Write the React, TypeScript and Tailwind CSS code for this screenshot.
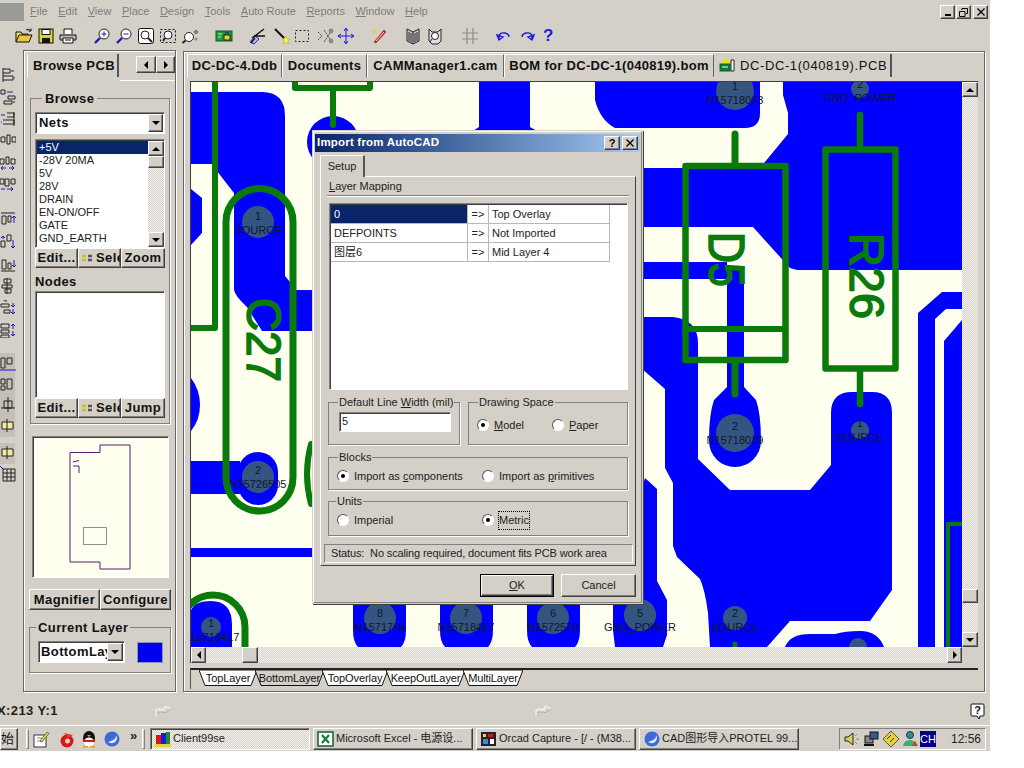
import React from 'react';

const raised = 'border border-t-white border-l-white border-r-[#404040] border-b-[#404040] shadow-[inset_-1px_-1px_0_#808080]';
const sunken = 'border border-t-[#808080] border-l-[#808080] border-r-white border-b-white shadow-[inset_1px_1px_0_#404040]';
const dither = 'bg-[repeating-conic-gradient(#d4d0c8_0%_25%,#f4f3f0_0%_50%)] bg-[length:2px_2px]';
const boldUi = 'font-bold tracking-[0.4px] text-[13px] text-[#111]';

const GREEN = '#0a7a0a';
const BLUE = '#0000ff';
const PADC = '#34557f';

// little triangle used by scrollbars and combos
const Arrow: React.FC<{ dir: 'up' | 'down' | 'left' | 'right' }> = ({ dir }) => {
  const pts = { up: '0,6 4,2 8,6', down: '0,2 8,2 4,6', left: '6,0 6,8 2,4', right: '2,0 2,8 6,4' }[dir];
  return (
    <svg width="8" height="8" viewBox="0 0 8 8">
      <polygon points={pts} fill="#000" />
    </svg>
  );
};

const ScrollBtn: React.FC<{ dir: 'up' | 'down' | 'left' | 'right'; className?: string }> = ({ dir, className = 'w-[15px] h-[15px]' }) => (
  <div className={`${className} ${raised} bg-[#d4d0c8] flex items-center justify-center shrink-0`}>
    <Arrow dir={dir} />
  </div>
);

const Magnifier: React.FC<{ mark?: 'plus' | 'minus' }> = ({ mark }) => (
  <>
    <circle cx="11" cy="7" r="5" fill="#fff" stroke="#222" />
    <line x1="7" y1="11" x2="2" y2="16" stroke="#1a1ab8" strokeWidth="2.4" />
    {mark && <line x1="8.5" y1="7" x2="13.5" y2="7" stroke="#1a1ab8" />}
    {mark === 'plus' && <line x1="11" y1="4.5" x2="11" y2="9.5" stroke="#1a1ab8" />}
  </>
);

const toolbarIcons: { key: string; cls: string; el: React.ReactNode }[] = [
  { key: 'open', cls: 'ml-[13px]', el: (<><path d="M1 15V5h5l1 2h6v2" fill="#f2dc6a" stroke="#111" /><path d="M1 15l3-7h13l-3 7z" fill="#e8c83c" stroke="#111" /><path d="M11 3q3-2 5 1M16 4V1.5M16 4h-2.5" fill="none" stroke="#111" /></>) },
  { key: 'save', cls: '', el: (<><rect x="2" y="2" width="14" height="14" fill="#d9d62e" stroke="#111" /><rect x="5" y="2.5" width="8" height="5" fill="#fff" stroke="#111" /><rect x="5" y="11" width="8" height="5" fill="#111" /></>) },
  { key: 'print', cls: '', el: (<><path d="M5 7V2h8v5" fill="#fff" stroke="#111" /><path d="M1 8h16v5H1z" fill="#bbb" stroke="#111" /><path d="M4 11h10v5H4z" fill="#fff" stroke="#111" /><path d="M6 13h6" stroke="#111" /></>) },
  { key: 'zin', cls: 'ml-[12px]', el: <Magnifier mark="plus" /> },
  { key: 'zout', cls: '', el: <Magnifier mark="minus" /> },
  { key: 'zfit', cls: '', el: (<><rect x="1.5" y="1.5" width="15" height="15" rx="2" fill="#fff" stroke="#111" /><circle cx="8" cy="8" r="4" fill="none" stroke="#222" /><path d="M11 11l4 4" stroke="#222" strokeWidth="2" /></>) },
  { key: 'zarea', cls: '', el: (<><rect x="1.5" y="2.5" width="15" height="13" fill="none" stroke="#111" strokeDasharray="2 2" /><circle cx="9" cy="8" r="4" fill="#fff" stroke="#222" /><path d="M6 11l-2 3" stroke="#222" strokeWidth="2" /></>) },
  { key: 'zsel', cls: '', el: (<><circle cx="8" cy="10" r="4.5" fill="#fff" stroke="#222" /><path d="M4.5 13.5L1.5 16" stroke="#222" strokeWidth="2" /><circle cx="15" cy="5" r="1.5" fill="#c8c020" stroke="#555" /><circle cx="15" cy="12" r="1.5" fill="#888" /></>) },
  { key: 'pcb', cls: 'ml-[12px]', el: (<><rect x="1" y="4" width="16" height="10" fill="#1f9a3a" stroke="#0c5a1c" /><path d="M3 7h4M3 10h3" stroke="#bfeebf" /><rect x="9" y="8" width="6" height="5" fill="#e8d23c" stroke="#222" /><path d="M10.5 8V6.5a1.5 1.5 0 0 1 3 0V8" fill="none" stroke="#222" /></>) },
  { key: 'route', cls: 'ml-[11px]', el: (<><path d="M2 15l5-6 4 3-5 5z" fill="#b8b8ff" stroke="#2222c8" /><path d="M4 11l12-9M3 16l4-5M6 9h11" stroke="#111" strokeWidth="1.4" /></>) },
  { key: 'sel', cls: 'ml-[3px]', el: (<><path d="M2 2l9 9" stroke="#111" strokeWidth="2" /><path d="M13 9l1.3 2.7 2.7.3-2 2 .5 3-2.5-1.4-2.5 1.4.5-3-2-2 2.7-.3z" fill="#f2ee4a" stroke="#a8a420" strokeWidth=".5" /></>) },
  { key: 'rect', cls: '-ml-[2px]', el: <rect x="2.5" y="3.5" width="13" height="11" fill="none" stroke="#222" strokeDasharray="2 2" /> },
  { key: 'swap', cls: 'ml-[2px]', el: (<><path d="M1 5l4 4-4 4M7 3l8 12M7 15l8-12" fill="none" stroke="#444" strokeDasharray="2 1" /><circle cx="14" cy="4" r="2.4" fill="#888" /><circle cx="14" cy="14" r="2.4" fill="#888" /></>) },
  { key: 'move', cls: '-ml-[2px]', el: <path d="M9 1v16M1 9h16M9 1L7 4M9 1l2 3M9 17l-2-3M9 17l2-3M1 9l3-2M1 9l3 2M17 9l-3-2M17 9l-3 2" fill="none" stroke="#1a1ad8" /> },
  { key: 'pen', cls: 'ml-[11px]', el: (<><path d="M4 15L14 3l2 2L6 16z" fill="#d83030" stroke="#901010" strokeWidth=".6" /><path d="M4 2v5M1.5 4.5h5M2 3l4 3" stroke="#e8d23c" /><path d="M6 14l8-9" stroke="#f4d8d0" /></>) },
  { key: 'book', cls: 'ml-[12px]', el: <path d="M3 2l6 3 6-3v12l-6 3-6-3zM9 5v12M5 5v9M7 6v9M11 6v9M13 5v9" fill="#c8c8c8" stroke="#222" /> },
  { key: 'book2', cls: '', el: (<><path d="M3 2l3 3h6l3-3v12l-3 3H6l-3-3z" fill="#ddd" stroke="#222" /><circle cx="9" cy="9" r="3.5" fill="#fff" stroke="#222" /><path d="M6 12l-2 3" stroke="#222" /></>) },
  { key: 'grid', cls: 'ml-[13px]', el: <path d="M6 1v16M12 1v16M1 6h16M1 12h16" stroke="#8a8a8a" strokeWidth="1.2" /> },
  { key: 'undo', cls: 'ml-[12px]', el: <path d="M4 12q-1-7 6-6 4 1 4 4M2 8l2 5 4-3z" fill="none" stroke="#1a1ad8" strokeWidth="1.4" /> },
  { key: 'redo', cls: 'ml-[1px]', el: <path d="M14 12q1-7-6-6-4 1-4 4M16 8l-2 5-4-3z" fill="none" stroke="#1a1ad8" strokeWidth="1.4" /> },
];

// [black strokes, blue arrows] for the alignment bar on the far left
const alignIcons: [string, string][] = [
  ['M3 1v14M3 2h7v4H3M3 9h10v4H3', 'M14 4H11M14 11h1'],
  ['M1 1h4v4H1zM8 7h7v3H8zM4 12h8v3H4z', 'M7 3h6M15 13h-2'],
  ['M14 1v14M7 2h7v4H7M3 9h11v4H3', 'M1 4h4M1 11h1'],
  ['M1 4h4v5H1zM7 2h3v9H7zM12 4h4v5h-4z', ''],
  ['M0 4h4v5H0zM6 2h3v7H6zM11 4h4v5h-4z', 'M1 13h5M3 11l-2 2 2 2M9 13h5M12 11l2 2-2 2'],
  ['M0 2h4v5H0zM5 2h4v7H5zM11 2h4v5h-4z', 'M1 12h4M7 12h6M11 10l2 2-2 2'],
  ['M1 1h14M2 4h4v8H2zM8 4h3v6H8z', 'M14 11V4M12 6l2-2 2 2'],
  ['M1 7h4v6H1zM7 1h4v6H7z', 'M3 2v3M13 6v8M11 12l2 2 2-2M1 4l2-2 2 2'],
  ['M1 15h14M2 4h4v9H2zM8 7h3v6H8z', 'M14 4v7M12 9l2 2 2-2'],
  ['M4 1h7v4H4zM2 7h10v3H2zM5 11h6v4H5zM7 0v16', ''],
  ['M1 4h8v3H1zM4 10h6v3H4zM3 0h3v2', 'M13 3v4M11 5l2 2 2-2M13 9v5M11 12l2 2 2-2'],
  ['M1 2h8v4H1zM1 8h8v3H1zM1 13h8v3H1z', 'M13 2v5M11 4l2-2 2 2M13 9v5M11 12l2 2 2-2'],
  ['M1 3h4v10H1zM7 3h5v6H7z', 'M0 15h16'],
  ['M1 3h4v5H1zM7 3h5v10H7zM1 10h4v4H1z', ''],
  ['M4 4h8v7H4zM8 0v15M1 11h14', ''],
  ['M2 4h11v7H2zM7 1v13', ''],
  ['M2 4h11v7H2zM7 1v13', ''],
  ['M3 3h12v12H3zM3 7h12M3 11h12M7 3v12M11 3v12', 'M0 0l4 4'],
];

const SideBar: React.FC = () => (
  <div className="w-[23px] shrink-0 flex flex-col pt-[15px] overflow-hidden">
    {alignIcons.map(([black, blue], i) => (
      <div
        key={i}
        className={`${i >= 12 ? 'h-[21px]' : 'h-[22px]'} shrink-0 ${i === 6 ? 'mt-[13px]' : ''} ${i === 12 ? 'mt-[11px]' : ''} ${i === 16 ? 'mt-[6px]' : ''} ${i >= 12 && i <= 16 ? 'bg-[#c4c0b8]' : ''} w-[15px]`}
      >
        <svg width="16" height="16" viewBox="0 0 16 16" className="mt-[2px]">
          <path d={black} fill={i === 15 || i === 16 ? '#f2eea0' : 'none'} stroke="#222" />
          {blue && <path d={blue} fill="none" stroke="#1a1ab8" />}
        </svg>
      </div>
    ))}
  </div>
);

const PanelButton: React.FC<{ label: string; cls: string; icon?: boolean }> = ({ label, cls, icon }) => (
  <div className={`${cls} ${raised} bg-[#d4d0c8] flex items-center justify-center overflow-hidden ${boldUi}`}>
    {icon && (
      <svg width="10" height="10" viewBox="0 0 10 10" className="shrink-0 mr-[4px]">
        <path d="M0 3h4M0 7h4" stroke="#c8c020" strokeWidth="2.4" />
        <path d="M6 3h4M6 7h4" stroke="#555" strokeWidth="2.4" />
      </svg>
    )}
    <span className="whitespace-nowrap">{label}</span>
  </div>
);

const nets = ['-28V 20MA', '5V', '28V', 'DRAIN', 'EN-ON/OFF', 'GATE', 'GND_EARTH'];

const BrowsePanel: React.FC = () => (
  <div className="w-[153px] h-[642px] shrink-0 border border-[#666] shadow-[inset_1px_1px_0_#fff,1px_1px_0_#fff] flex flex-col">
    <div className="h-[26px] mt-[3px] flex items-start shrink-0">
      <div className={`ml-[3px] w-[93px] h-[23px] border-l border-l-white border-r-2 border-r-[#555] pl-[5px] flex items-center whitespace-nowrap ${boldUi}`}>Browse PCB</div>
      <div className={`ml-[17px] mt-[2px] w-[20px] h-[17px] ${raised} flex items-center justify-center`}><Arrow dir="left" /></div>
      <div className={`w-[19px] mt-[2px] h-[17px] ${raised} flex items-center justify-center`}><Arrow dir="right" /></div>
    </div>
    <div className="border-t border-white ml-[96px] shrink-0" />

    <fieldset className="ml-[6px] mt-[10px] w-[140px] h-[333px] border border-[#808080] shadow-[1px_1px_0_#fff] px-[4px] shrink-0">
      <legend className={`ml-[7px] px-[3px] leading-[15px] ${boldUi}`}>Browse</legend>
      <div className={`mt-[6px] w-[130px] h-[22px] ${sunken} bg-white flex items-center justify-between pr-[1px]`}>
        <span className={`pl-[3px] ${boldUi}`}>Nets</span>
        <ScrollBtn dir="down" className="w-[15px] h-[18px]" />
      </div>
      <div className={`mt-[5px] w-[130px] h-[109px] ${sunken} bg-white flex pl-[1px] pt-[1px]`}>
        <div className="flex-1 text-[11px] leading-[13px] text-[#222] overflow-hidden">
          <div className="bg-[#0a246a] text-white pl-[2px] h-[13px]">+5V</div>
          {nets.map((n) => <div key={n} className="pl-[2px] h-[13px]">{n}</div>)}
        </div>
        <div className={`w-[16px] ${dither} flex flex-col justify-between`}>
          <div className="flex flex-col">
            <ScrollBtn dir="up" className="w-[16px] h-[15px]" />
            <div className={`w-[16px] h-[12px] ${raised} bg-[#d4d0c8]`} />
          </div>
          <ScrollBtn dir="down" className="w-[16px] h-[15px]" />
        </div>
      </div>
      <div className="flex w-[130px] h-[20px]">
        <PanelButton label="Edit..." cls="w-[43px]" />
        <PanelButton label="Sele" icon cls="w-[43px] !justify-start pl-[3px]" />
        <PanelButton label="Zoom" cls="w-[44px]" />
      </div>
      <div className={`mt-[4px] h-[19px] ${boldUi}`}>Nodes</div>
      <div className={`w-[130px] h-[107px] ${sunken} bg-white`} />
      <div className="flex w-[130px] h-[20px]">
        <PanelButton label="Edit..." cls="w-[43px]" />
        <PanelButton label="Sele" icon cls="w-[43px] !justify-start pl-[3px]" />
        <PanelButton label="Jump" cls="w-[44px]" />
      </div>
    </fieldset>

    <div className={`ml-[8px] mt-[12px] w-[137px] h-[142px] ${sunken} bg-[#fffff0] shrink-0`}>
      <svg width="135" height="140" viewBox="33 438 135 140">
        <path d="M70 453.5H100V446H130V570H100V563H70Z" fill="none" stroke="#5a1a6e" />
        <path d="M73 463l6-1.5M73 467h6v7" fill="none" stroke="#5a1a6e" />
        <rect x="83.5" y="528.5" width="23" height="17" fill="none" stroke="#222" strokeDasharray="1 1" />
      </svg>
    </div>

    <div className="ml-[5px] mt-[11px] flex shrink-0">
      <PanelButton label="Magnifier" cls="w-[71px] h-[21px]" />
      <PanelButton label="Configure" cls="w-[71px] h-[21px]" />
    </div>

    <fieldset className="ml-[5px] mt-[10px] w-[142px] h-[53px] border border-[#808080] shadow-[1px_1px_0_#fff] shrink-0">
      <legend className={`ml-[6px] px-[2px] leading-[15px] ${boldUi}`}>Current Layer</legend>
      <div className="flex items-center mt-[6px]">
        <div className={`ml-[8px] w-[87px] h-[22px] ${sunken} bg-white flex items-center justify-between pr-[1px] overflow-hidden`}>
          <span className={`pl-[2px] w-[68px] overflow-hidden whitespace-nowrap ${boldUi}`}>BottomLay</span>
          <ScrollBtn dir="down" className="w-[16px] h-[18px]" />
        </div>
        <div className="ml-[12px] w-[26px] h-[21px] bg-[#0000f0] border border-[#9090c0]" />
      </div>
    </fieldset>
  </div>
);

const docTabs: { label: string; cls: string }[] = [
  { label: 'DC-DC-4.Ddb', cls: 'w-[95px]' },
  { label: 'Documents', cls: 'w-[85px]' },
  { label: 'CAMManager1.cam', cls: 'w-[137px]' },
  { label: 'BOM for DC-DC-1(040819).bom', cls: 'w-[210px]' },
];

const layerTabs: { label: string; w: number; active?: boolean }[] = [
  { label: 'TopLayer', w: 58 },
  { label: 'BottomLayer', w: 69, active: true },
  { label: 'TopOverlay', w: 66 },
  { label: 'KeepOutLayer', w: 79 },
  { label: 'MultiLayer', w: 60 },
];

const LayerTab: React.FC<{ label: string; w: number; active?: boolean }> = ({ label, w, active }) => (
  <div className="relative h-[16px] -ml-[2px] flex items-center justify-center text-[11px] tracking-[-0.1px] text-[#111]" style={{ width: w }}>
    <svg className="absolute inset-0" width={w} height={16} viewBox={`0 0 ${w} 16`}>
      <polygon points={`0,0 6,15.5 ${w - 6},15.5 ${w},0`} fill={active ? '#d4d0c8' : '#fff'} stroke="#111" />
    </svg>
    <span className="relative">{label}</span>
  </div>
);

const PadLabel: React.FC<{ x: number; y: number; n: string; name: string }> = ({ x, y, n, name }) => (
  <g fontFamily="Liberation Sans, sans-serif" fontSize="11" fill="#0f1730" textAnchor="middle">
    <text x={x} y={y}>{n}</text>
    <text x={x} y={y + 14}>{name}</text>
  </g>
);

const Silk: React.FC<{ x: number; y: number; len: number; size: number; text: string }> = ({ x, y, len, size, text }) => (
  <text
    transform={`translate(${x},${y}) rotate(90)`}
    fontFamily="Liberation Sans, sans-serif"
    fontSize={size}
    textLength={len}
    lengthAdjust="spacingAndGlyphs"
    fill={GREEN}
    stroke={GREEN}
    strokeWidth="1.6"
  >
    {text}
  </text>
);

const Board: React.FC = () => (
  <svg width="771" height="565" viewBox="191 82 771 565" className="bg-[#fffff0] shrink-0">
    <g fill={BLUE}>
      <path d="M191 92H262Q285 92 285 116V276L290 282V290H320V331H262L247 307Q234 295 234 289V193L220 175L212 164H191Z" />
      <path d="M191 189L202 198V233L191 245Z" />
      <path d="M191 378Q200 390 200 405Q200 420 191 431Z" />
      <path d="M191 461H240V494H191Z" />
      <rect x="238" y="452" width="40" height="53" rx="20" />
      <rect x="191" y="548" width="130" height="9" />
      <path d="M191 610Q195 601 211 601Q232 601 232 625V647H191Z" />
      <circle cx="333" cy="142" r="26" />
      <path d="M479 82H530V127L537 131H473L479 127Z" />
      <path d="M595 82H760V113Q760 128 745 128H615Q600 120 595 100Z" />
      <path d="M641 168H760L788 134V113L783 95V82H962V270H797L790 268L753 227H641Z" />
      <path d="M641 262H727V270H744V387L756 400Q761 414 761 441A26 26 0 0 1 709 441Q709 414 714 400L727 387V279H641Z" />
      <path d="M641 317H673Q698 320 698 343V459L730 490H810L831 465V413Q831 392 852 392H872Q892 392 892 413V590L870 621H790L767 647H710L708 613Q705 590 700 579L677 557L673 546V483L665 468V389L641 368Z" />
      <path d="M645 478L657 489V581L667 600V635L663 647H615L613 630V595L645 478Z" />
      <path d="M353 600V630Q353 642 358 647H401Q406 642 406 630V600Z" />
      <path d="M440 600V630Q440 642 445 647H488Q493 642 493 630V600Z" />
      <path d="M527 600V630Q527 642 532 647H575Q580 642 580 630V600Z" />
      <path d="M785 647Q790 634 810 634H835Q845 631 860 631Q878 631 884 647Z" />
      <path d="M918 647V313L942 292H962V309H946L935 319V647Z" />
      <path d="M944 647V341L962 320V647Z" />
    </g>

    <g fill={PADC}>
      <circle cx="258" cy="222" r="16" />
      <circle cx="258" cy="477" r="16" />
      <circle cx="211" cy="627" r="10" />
      <circle cx="380" cy="618" r="16" />
      <circle cx="466" cy="618" r="16" />
      <circle cx="553" cy="618" r="16" />
      <circle cx="640" cy="615" r="16" />
      <circle cx="735" cy="91" r="19" />
      <circle cx="860" cy="89" r="9" />
      <circle cx="735" cy="433" r="19" />
      <circle cx="860" cy="430" r="9" />
      <circle cx="735" cy="618" r="12" />
      <circle cx="858" cy="647" r="9" />
    </g>

    <PadLabel x={258} y={220} n="1" name="SOURCE" />
    <PadLabel x={258} y={474} n="2" name="N15726505" />
    <PadLabel x={211} y={627} n="1" name="N15718417" />
    <PadLabel x={380} y={617} n="8" name="N1571765" />
    <PadLabel x={466} y={617} n="7" name="N15718417" />
    <PadLabel x={553} y={617} n="6" name="N1572570" />
    <PadLabel x={640} y={617} n="5" name="GND_POWER" />
    <PadLabel x={735} y={90} n="1" name="N15718063" />
    <PadLabel x={860} y={88} n="2" name="GND_POWER" />
    <PadLabel x={735} y={430} n="2" name="N15718019" />
    <PadLabel x={860} y={427} n="1" name="SOURCE" />
    <PadLabel x={735} y={617} n="2" name="SOURCE" />

    <g fill="none" stroke={GREEN} strokeLinejoin="round" strokeLinecap="round">
      <path d="M215 82V328H191" strokeWidth="6" />
      <path d="M295 82V88H370V82" strokeWidth="6" />
      <path d="M333 88V125" strokeWidth="6" />
      <rect x="226" y="188.5" width="67" height="322.5" rx="33.5" strokeWidth="7" />
      <path d="M181 627A32 32 0 0 1 245 627V648" strokeWidth="7" />
      <path d="M311 444Q303 474 311 504" strokeWidth="6" />
      <rect x="685.5" y="166" width="100" height="194" strokeWidth="6.5" />
      <path d="M685 329H785" strokeWidth="6" />
      <path d="M735 134V163M735 363V394" strokeWidth="7" />
      <rect x="825.5" y="149.5" width="70" height="219" strokeWidth="6.5" />
      <path d="M860 115V149M860 372V404" strokeWidth="6.5" />
      <path d="M735 644V650" strokeWidth="5" />
      <path d="M965 524H948V650" strokeWidth="4" />
    </g>

    <Silk x={247} y={298} len={84} size={48} text="C27" />
    <Silk x={709} y={232} len={55} size={50} text="D5" />
    <Silk x={850} y={233} len={86} size={48} text="R26" />
  </svg>
);

const Radio: React.FC<{ on?: boolean; label: React.ReactNode; cls: string; focus?: boolean }> = ({ on, label, cls, focus }) => (
  <div className={`${cls} flex items-center`}>
    <div className="w-[12px] h-[12px] rounded-full bg-white border border-t-[#555] border-l-[#555] border-r-white border-b-white flex items-center justify-center shrink-0">
      {on && <div className="w-[4px] h-[4px] rounded-full bg-black" />}
    </div>
    <span className={`ml-[5px] ${focus ? 'outline-1 outline-dotted outline-black' : ''}`}>{label}</span>
  </div>
);

const Group: React.FC<{ title: React.ReactNode; cls: string; legendCls?: string; children: React.ReactNode }> = ({ title, cls, legendCls = 'ml-[9px]', children }) => (
  <fieldset className={`${cls} border border-[#808080] shadow-[1px_1px_0_#fff] shrink-0`}>
    <legend className={`${legendCls} px-[1px] leading-[13px] whitespace-nowrap`}>{title}</legend>
    {children}
  </fieldset>
);

const mappings: [React.ReactNode, string][] = [
  ['0', 'Top Overlay'],
  ['DEFPOINTS', 'Not Imported'],
  ['图层6', 'Mid Layer 4'],
];

const ImportDialog: React.FC = () => (
  <div className="absolute left-[312px] top-[130px] w-[331px] h-[474px] bg-[#d4d0c8] border border-[#d4d0c8] shadow-[1px_1px_0_#404040,inset_1px_1px_0_#fff,inset_-1px_-1px_0_#808080] p-[2px] flex flex-col text-[11px] text-[#222]">
    <div className="h-[18px] mt-px bg-gradient-to-r from-[#0a246a] to-[#a6caf0] flex items-center pl-[2px] pr-[2px] shrink-0">
      <span className="text-white font-bold text-[11.5px] tracking-[0.2px]">Import from AutoCAD</span>
      <div className={`ml-auto w-[16px] h-[14px] ${raised} bg-[#d4d0c8] flex items-center justify-center text-[11px] font-bold text-black`}>?</div>
      <div className={`ml-[2px] w-[16px] h-[14px] ${raised} bg-[#d4d0c8] flex items-center justify-center`}>
        <svg width="8" height="8" viewBox="0 0 8 8"><path d="M0.5 0.5l7 7M7.5 0.5l-7 7" stroke="#000" strokeWidth="1.4" /></svg>
      </div>
    </div>

    <div className="ml-[5px] mt-[3px] w-[45px] h-[22px] border-t border-l border-t-white border-l-white border-r-2 border-r-[#555] flex items-center justify-center shrink-0 relative z-10 bg-[#d4d0c8]">Setup</div>
    <div className="ml-[5px] -mt-px w-[316px] h-[390px] border border-t-white border-l-white border-r-[#404040] border-b-[#404040] px-[8px] flex flex-col shrink-0">
      <div className="h-[17px] mt-[1px] flex items-end pb-[2px] leading-[14px] shrink-0"><span><u>L</u>ayer Mapping</span></div>
      <div className="-mx-[2px] border-t border-t-[#808080] border-b border-b-white h-[2px] shrink-0" />
      <div className={`mt-[6px] w-[299px] h-[187px] ${sunken} bg-white shrink-0 pl-[1px] pt-[1px]`}>
        {mappings.map(([a, b], i) => (
          <div key={i} className="flex h-[19px] w-[279px] border-b border-b-[#b8b8b8]">
            <div className={`w-[137px] pl-[3px] leading-[18px] border-r border-r-[#b8b8b8] ${i === 0 ? 'bg-[#0a246a] text-white' : ''} [font-family:'Liberation_Sans','Noto_Sans_CJK_SC',sans-serif]`}>{a}</div>
            <div className="w-[21px] text-center leading-[18px] border-r border-r-[#b8b8b8]">{'=>'}</div>
            <div className="w-[121px] pl-[3px] leading-[18px] border-r border-r-[#b8b8b8]">{b}</div>
          </div>
        ))}
      </div>
      <div className="flex mt-[6px] -ml-[1px] gap-[8px] shrink-0">
        <Group title={<>Default Line <u>W</u>idth (mil)</>} cls="w-[132px] h-[49px]">
          <div className={`ml-[10px] mt-[3px] w-[112px] h-[20px] ${sunken} bg-white pl-[2px] leading-[17px]`}>5</div>
        </Group>
        <Group title="Drawing Space" cls="w-[160px] h-[49px]">
          <div className="flex mt-[8px] relative">
            <Radio on label={<><u>M</u>odel</>} cls="ml-[8px] w-[75px]" />
            <Radio label={<><u>P</u>aper</>} cls="" />
          </div>
        </Group>
      </div>
      <Group title="Blocks" cls="w-[300px] h-[39px] mt-[6px] -ml-[1px]">
        <div className="flex mt-[4px]">
          <Radio on label={<>Import as <u>c</u>omponents</>} cls="ml-[8px] w-[145px]" />
          <Radio label={<>Import as <u>p</u>rimitives</>} cls="" />
        </div>
      </Group>
      <Group title="Units" cls="w-[300px] h-[41px] mt-[5px] -ml-[1px]" legendCls="ml-[7px]">
        <div className="flex mt-[4px]">
          <Radio label="Imperial" cls="ml-[8px] w-[145px]" />
          <Radio on focus label="Metric" cls="" />
        </div>
      </Group>
      <div className="mt-[8px] -ml-[5px] w-[309px] h-[19px] border border-t-[#808080] border-l-[#808080] border-r-white border-b-white pl-[6px] leading-[17px] tracking-[-0.14px] whitespace-pre shrink-0">Status:  No scaling required, document fits PCB work area</div>
    </div>
    <div className="flex mt-[8px] shrink-0">
      <div className="ml-[165px] w-[74px] h-[23px] border border-black p-0 shrink-0">
        <div className={`w-full h-full ${raised} flex items-center justify-center`}><span><u>O</u>K</span></div>
      </div>
      <div className={`ml-[7px] w-[75px] h-[23px] ${raised} flex items-center justify-center`}>Cancel</div>
    </div>
  </div>
);

const DocArea: React.FC = () => (
  <div className="ml-[7px] mt-px w-[802px] h-[641px] shrink-0 border border-[#666] shadow-[inset_1px_1px_0_#fff,1px_1px_0_#fff] flex flex-col">
    <div className="h-[24px] mt-[2px] ml-[3px] flex shrink-0">
      {docTabs.map((t) => (
        <div key={t.label} className={`${t.cls} h-[23px] border-l border-l-white border-t border-t-white border-r border-r-[#666] flex items-center justify-center whitespace-nowrap ${boldUi} !tracking-[0.3px]`}>{t.label}</div>
      ))}
      <div className={`w-[178px] h-[23px] border-r-2 border-r-[#555] flex items-center pl-[5px] whitespace-nowrap ${boldUi} !font-normal !tracking-[0.6px]`}>
        <svg width="16" height="15" viewBox="0 0 16 15" className="mr-[5px] shrink-0">
          <circle cx="7" cy="5" r="4" fill="#e8e020" />
          <rect x="1" y="6" width="10" height="7" fill="#0f7a3a" stroke="#063" />
          <path d="M12 2h3v11h-3z" fill="#fff" stroke="#222" />
          <path d="M3 9h6" stroke="#fff" />
        </svg>
        DC-DC-1(040819).PCB
      </div>
    </div>
    <div className="ml-[6px] mt-[3px] w-[788px] border-t border-l border-[#404040] flex flex-col shrink-0">
      <div className="flex">
        <Board />
        <div className={`w-[16px] h-[565px] ${dither} flex flex-col`}>
          <ScrollBtn dir="up" className="w-[16px] h-[15px]" />
          <div className={`mt-[492px] w-[16px] h-[14px] ${raised} bg-[#d4d0c8]`} />
          <div className="mt-auto"><ScrollBtn dir="down" className="w-[16px] h-[15px]" /></div>
        </div>
      </div>
      <div className={`w-[771px] h-[16px] ${dither} flex`}>
        <ScrollBtn dir="left" className="w-[15px] h-[16px]" />
        <div className={`ml-[36px] w-[16px] h-[16px] ${raised} bg-[#d4d0c8]`} />
        <div className="ml-auto"><ScrollBtn dir="right" className="w-[15px] h-[16px]" /></div>
      </div>
    </div>
    <div className="ml-[6px] mt-[5px] w-[788px] h-[21px] border-t-2 border-l border-t-[#222] border-l-[#555] pl-[10px] flex shrink-0">
      {layerTabs.map((t) => <LayerTab key={t.label} {...t} />)}
    </div>
  </div>
);

const GhostArrow: React.FC = () => (
  <svg width="18" height="16" viewBox="0 0 18 16">
    <path d="M1 15V10Q1 8 3 8H10V5L16 8L10 12V10H4Q3 10 3 12V15" fill="#d4d0c8" stroke="#fff" />
    <path d="M3 15V11H10V12L16 8" fill="none" stroke="#a8a49c" />
  </svg>
);

const MiniIcon: React.FC<{ children: React.ReactNode; cls?: string }> = ({ children, cls = '' }) => (
  <svg width="18" height="18" viewBox="0 0 18 18" className={`shrink-0 ${cls}`}>{children}</svg>
);

const ColorOrb = (
  <>
    <circle cx="9" cy="9" r="7.5" fill="#3a6ad8" />
    <path d="M5 12q5 3 8-1 2-3 0-6 0 4-3 5-2 1-5 2z" fill="#dfe9fb" />
  </>
);

const TaskButton: React.FC<{ cls?: string; icon: React.ReactNode; label: string }> = ({ cls = '', icon, label }) => (
  <div className={`${cls} w-[160px] h-[22px] flex items-center pl-[3px] text-[11px] text-[#222] whitespace-nowrap overflow-hidden shrink-0 [font-family:'Liberation_Sans','Noto_Sans_CJK_SC',sans-serif]`}>
    <MiniIcon>{icon}</MiniIcon>
    <span className="ml-[1px]">{label}</span>
  </div>
);

const App: React.FC = () => {
  return (
    <div className="w-[1024px] h-[768px] bg-white overflow-hidden [font-family:'Liberation_Sans','Noto_Sans_CJK_SC',sans-serif]">
      <div className="relative w-[990px] h-[751px] bg-[#d4d0c8] flex flex-col overflow-hidden">
        {/* menu bar */}
        <div className="h-[22px] flex items-center shrink-0 text-[11px] text-[#7c7c7c] pt-[1px]">
          <div className="w-[24px] h-[18px] bg-[#9a9a98]" />
          <div className="ml-[6px] flex gap-[10.5px]">
            <span><u>F</u>ile</span>
            <span><u>E</u>dit</span>
            <span><u>V</u>iew</span>
            <span><u>P</u>lace</span>
            <span><u>D</u>esign</span>
            <span><u>T</u>ools</span>
            <span><u>A</u>uto Route</span>
            <span><u>R</u>eports</span>
            <span><u>W</u>indow</span>
            <span><u>H</u>elp</span>
          </div>
          <div className="ml-auto mr-[2px] flex gap-[1px] mt-[1px]">
            <div className={`w-[15px] h-[14px] ${raised} flex items-end justify-center pb-[2px]`}><div className="w-[6px] h-[2px] bg-black" /></div>
            <div className={`w-[15px] h-[14px] ${raised} flex items-center justify-center`}>
              <svg width="9" height="9" viewBox="0 0 9 9"><path d="M3 2V0.5H8.5V5.5H7M0.5 3.5H6V8.5H0.5Z" fill="none" stroke="#000" /></svg>
            </div>
            <div className={`ml-[1px] w-[15px] h-[14px] ${raised} flex items-center justify-center`}>
              <svg width="8" height="8" viewBox="0 0 8 8"><path d="M0.5 0.5l7 7M7.5 0.5l-7 7" stroke="#000" strokeWidth="1.4" /></svg>
            </div>
          </div>
        </div>

        {/* toolbar */}
        <div className="h-[28px] flex items-center shrink-0">
          {toolbarIcons.map((t) => (
            <div key={t.key} className={`${t.cls} w-[22px] flex justify-center shrink-0`}>
              <svg width="18" height="18" viewBox="0 0 18 18">{t.el}</svg>
            </div>
          ))}
          <span className="ml-[5px] text-[17px] font-bold text-[#1a1ad8]">?</span>
        </div>

        {/* workspace */}
        <div className="h-[643px] flex shrink-0">
          <SideBar />
          <BrowsePanel />
          <DocArea />
        </div>

        {/* status line */}
        <div className="h-[32px] flex items-center shrink-0">
          <span className="-ml-[3px] w-[158px] text-[13px] font-bold tracking-[0.4px] text-[#222] mt-[4px]">X:213 Y:1</span>
          <GhostArrow />
          <div className="ml-[362px]"><GhostArrow /></div>
          <div className="ml-auto mr-[5px] mt-[4px]">
            <svg width="15" height="17" viewBox="0 0 15 17">
              <path d="M2 1H13Q14 1 14 2V12Q14 13 13 13H10L9 16L7 13H2Q1 13 1 12V2Q1 1 2 1Z" fill="#fff" stroke="#111" />
              <text x="7.5" y="11" textAnchor="middle" fontSize="11" fontWeight="bold" fontFamily="Liberation Sans, sans-serif" fill="#111">?</text>
            </svg>
          </div>
        </div>

        {/* taskbar */}
        <div className="h-[26px] border-t border-t-white flex items-center shrink-0">
          <div className={`w-[18px] h-[22px] ${raised} flex justify-end items-center overflow-hidden pr-[3px] text-[13px] text-[#111] whitespace-nowrap`}>开始</div>
          <div className="ml-[8px] w-[3px] h-[20px] border border-t-white border-l-white border-r-[#808080] border-b-[#808080]" />
          <MiniIcon cls="ml-[3px]">
            <rect x="2" y="5" width="12" height="12" fill="#fff" stroke="#335" />
            <path d="M5 8h6M5 11h6" stroke="#7a9a5a" />
            <path d="M8 11L15 2l2 1.5L10 12z" fill="#e8d23c" stroke="#333" strokeWidth=".6" />
          </MiniIcon>
          <MiniIcon cls="ml-[9px]">
            <circle cx="8" cy="11" r="6.5" fill="#d81818" />
            <path d="M5 3l9 2-5 3" fill="#e83030" />
            <circle cx="8.5" cy="11" r="2.5" fill="#f4c8c8" />
          </MiniIcon>
          <MiniIcon cls="ml-[3px]">
            <ellipse cx="9" cy="8" rx="6" ry="7" fill="#111" />
            <ellipse cx="9" cy="12" rx="5" ry="4.5" fill="#fff" />
            <path d="M3 10h12v2H3z" fill="#d81818" />
            <path d="M7 5l2 2 2-2z" fill="#e8a020" />
            <path d="M3 16h5v1.5H3zM10 16h5v1.5h-5z" fill="#e8a020" />
          </MiniIcon>
          <MiniIcon cls="ml-[5px]">{ColorOrb}</MiniIcon>
          <span className="ml-[9px] -mt-[6px] text-[13px] font-bold text-[#222] leading-none w-[9px]">»</span>
          <div className="ml-[3px] w-[3px] h-[20px] border border-t-white border-l-white border-r-[#808080] border-b-[#808080]" />
          <TaskButton
            cls={`ml-[5px] ${sunken} ${dither}`}
            icon={<><path d="M2 5h5v11H2z" fill="#d81818" /><path d="M7 3h5v13H7z" fill="#1a1ad8" /><path d="M12 2h4v14h-4z" fill="#1a8a3a" /><path d="M1 14h16v3H1z" fill="#e8d23c" /></>}
            label="Client99se"
          />
          <TaskButton
            cls={`ml-[3px] ${raised}`}
            icon={<><rect x="1" y="2" width="15" height="14" fill="#fff" stroke="#1a6a3a" strokeWidth="1.6" /><path d="M5 5l7 8M12 5l-7 8" stroke="#1a7a3a" strokeWidth="2.2" /></>}
            label="Microsoft Excel - 电源设..."
          />
          <TaskButton
            cls={`ml-[3px] ${raised}`}
            icon={<><rect x="1" y="2" width="15" height="14" fill="#223" /><path d="M3 4h3v3H3z" fill="#e8e020" /><path d="M8 4h5v3H8z" fill="#d81818" /><path d="M3 9h5v5H3z" fill="#3a8ad8" /><path d="M10 9h4v5h-4z" fill="#fff" /></>}
            label="Orcad Capture - [/ - (M38..."
          />
          <TaskButton cls={`ml-[3px] ${raised}`} icon={ColorOrb} label="CAD图形导入PROTEL 99..." />

          <div className="ml-[40px] w-[147px] h-[22px] border border-t-[#808080] border-l-[#808080] border-r-white border-b-white flex items-center pl-[3px]">
            <MiniIcon>
              <path d="M2 7h3l5-4v12l-5-4H2z" fill="#d8d060" stroke="#222" />
              <path d="M12 6l2-2M13 9h3M12 12l2 2" stroke="#888" />
            </MiniIcon>
            <MiniIcon cls="ml-[2px]">
              <rect x="2" y="6" width="8" height="7" fill="#888" stroke="#111" />
              <rect x="7" y="2" width="8" height="7" fill="#3a5a8a" stroke="#111" />
              <path d="M1 15h10" stroke="#111" strokeWidth="2" />
            </MiniIcon>
            <MiniIcon cls="ml-[1px]">
              <path d="M9 1l8 8-8 8-8-8z" fill="#e8d23c" stroke="#555" />
              <path d="M5 9l4-4M8 12l4-4" stroke="#333" />
            </MiniIcon>
            <MiniIcon cls="ml-[1px]">
              <circle cx="9" cy="5" r="3.5" fill="#3a8a9a" stroke="#234" />
              <path d="M2 16q1-6 7-6 6 0 7 6z" fill="#3ab06a" />
              <path d="M11 16l3-5 3 5z" fill="#e83030" />
            </MiniIcon>
            <div className="ml-[1px] w-[16px] h-[16px] bg-[#000080] text-white text-[11px] leading-[16px] text-center shrink-0">CH</div>
            <span className="ml-[15px] text-[12px] text-[#222]">12:56</span>
          </div>
        </div>

        <ImportDialog />
      </div>
    </div>
  );
};

export default App;
